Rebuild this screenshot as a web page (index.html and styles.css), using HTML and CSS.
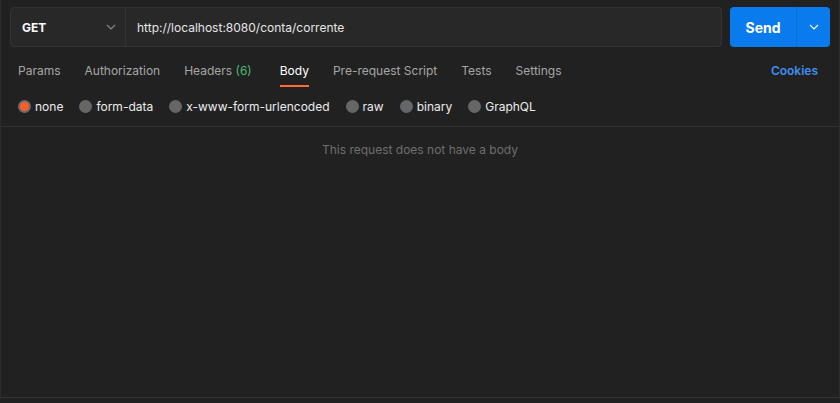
FILE: index.html
```html
<!DOCTYPE html>
<html>
<head>
<meta charset="utf-8">
<link rel="stylesheet" href="styles.css">
</head>
<body>
<div class="pane">
  <div class="urlrow">
    <div class="urlbox">
      <div class="method">
        <span class="method-name">GET</span>
        <svg class="chev" width="10" height="6" viewBox="0 0 10 6"><path d="M1 1l4 4 4-4" fill="none" stroke="#8a8a8a" stroke-width="1.1"/></svg>
      </div>
      <div class="url">http://localhost:8080/conta/corrente</div>
    </div>
    <div class="send">
      <span class="send-label">Send</span>
      <span class="send-drop"><svg width="10" height="6" viewBox="0 0 10 6"><path d="M1 1l4 4 4-4" fill="none" stroke="#ffffff" stroke-width="1.1"/></svg></span>
    </div>
  </div>
  <div class="tabs">
    <span class="tab">Params</span>
    <span class="tab">Authorization</span>
    <span class="tab headers">Headers <span class="count">(6)</span></span>
    <span class="tab active">Body</span>
    <span class="tab">Pre-request Script</span>
    <span class="tab">Tests</span>
    <span class="tab">Settings</span>
    <span class="cookies">Cookies</span>
  </div>
  <div class="radios">
    <label class="radio"><span class="dot on"></span>none</label>
    <label class="radio"><span class="dot"></span>form-data</label>
    <label class="radio"><span class="dot"></span>x-www-form-urlencoded</label>
    <label class="radio"><span class="dot"></span>raw</label>
    <label class="radio"><span class="dot"></span>binary</label>
    <label class="radio"><span class="dot"></span>GraphQL</label>
  </div>
  <div class="body">
    <div class="empty">This request does not have a body</div>
  </div>
</div>
</body>
</html>
```
FILE: styles.css
```css
* { box-sizing: border-box; }
html, body { margin: 0; padding: 0; background: #212121; }
body { font-family: Inter, "Noto Sans", sans-serif; width: 840px; height: 403px; overflow: hidden; }
.pane {
  height: 398px;
  border-left: 1px solid #2c2c2c;
  border-right: 1px solid #2c2c2c;
  border-bottom: 1px solid #333333;
  display: flex;
  flex-direction: column;
}
.urlrow {
  display: flex;
  padding: 7px 9px 0 9px;
  gap: 8px;
  height: 47px;
}
.urlbox {
  flex: 1;
  display: flex;
  background: #282828;
  border: 1px solid #333333;
  border-radius: 4px;
}
.method {
  width: 115px;
  border-right: 1px solid #333333;
  display: flex;
  align-items: center;
  justify-content: space-between;
  padding: 0 9px 0 11px;
}
.method-name { color: #ffffff; font-weight: 700; font-size: 12px; }
.chev { display: block; }
.url {
  color: #e6e6e6;
  font-size: 12px;
  display: flex;
  align-items: center;
  padding-left: 11px;
}
.send {
  width: 100px;
  background: #097bed;
  border-radius: 4px;
  display: flex;
  color: #fff;
}
.send-label {
  width: 67px;
  display: flex;
  align-items: center;
  justify-content: center;
  font-weight: 700;
  font-size: 14px;
  border-right: 1px solid #0a6fd6;
}
.send-drop {
  flex: 1;
  display: flex;
  align-items: center;
  justify-content: center;
}
.send-drop svg { display: block; }
.tabs {
  display: flex;
  align-items: flex-start;
  padding: 16px 21px 0 17px;
  height: 40px;
  font-size: 12px;
}
.tab {
  color: #a6a6a6;
  margin-right: 24px;
  line-height: 16px;
  padding-bottom: 6px;
  border-bottom: 2px solid transparent;
}
.tab.headers { margin-right: 28px; }
.tab.active { color: #ffffff; border-bottom-color: #ff6c37; }
.count { color: #48b871; }
.cookies { margin-left: auto; color: #3d8ff0; font-weight: 600; line-height: 16px; }
.radios {
  display: flex;
  align-items: center;
  padding: 0 0 0 17px;
  height: 40px;
  font-size: 12px;
  color: #ececec;
  border-bottom: 1px solid #303030;
}
.radio { display: flex; align-items: center; margin-right: 16px; }
.dot {
  width: 13px;
  height: 13px;
  border-radius: 50%;
  background: #666666;
  margin-right: 4px;
}
.dot.on {
  background: #ff5c27;
  border: 2px solid #6b6b6b;
}
.body { flex: 1; }
.empty {
  text-align: center;
  color: #6e6e6e;
  font-size: 12px;
  padding-top: 15px;
}
```
